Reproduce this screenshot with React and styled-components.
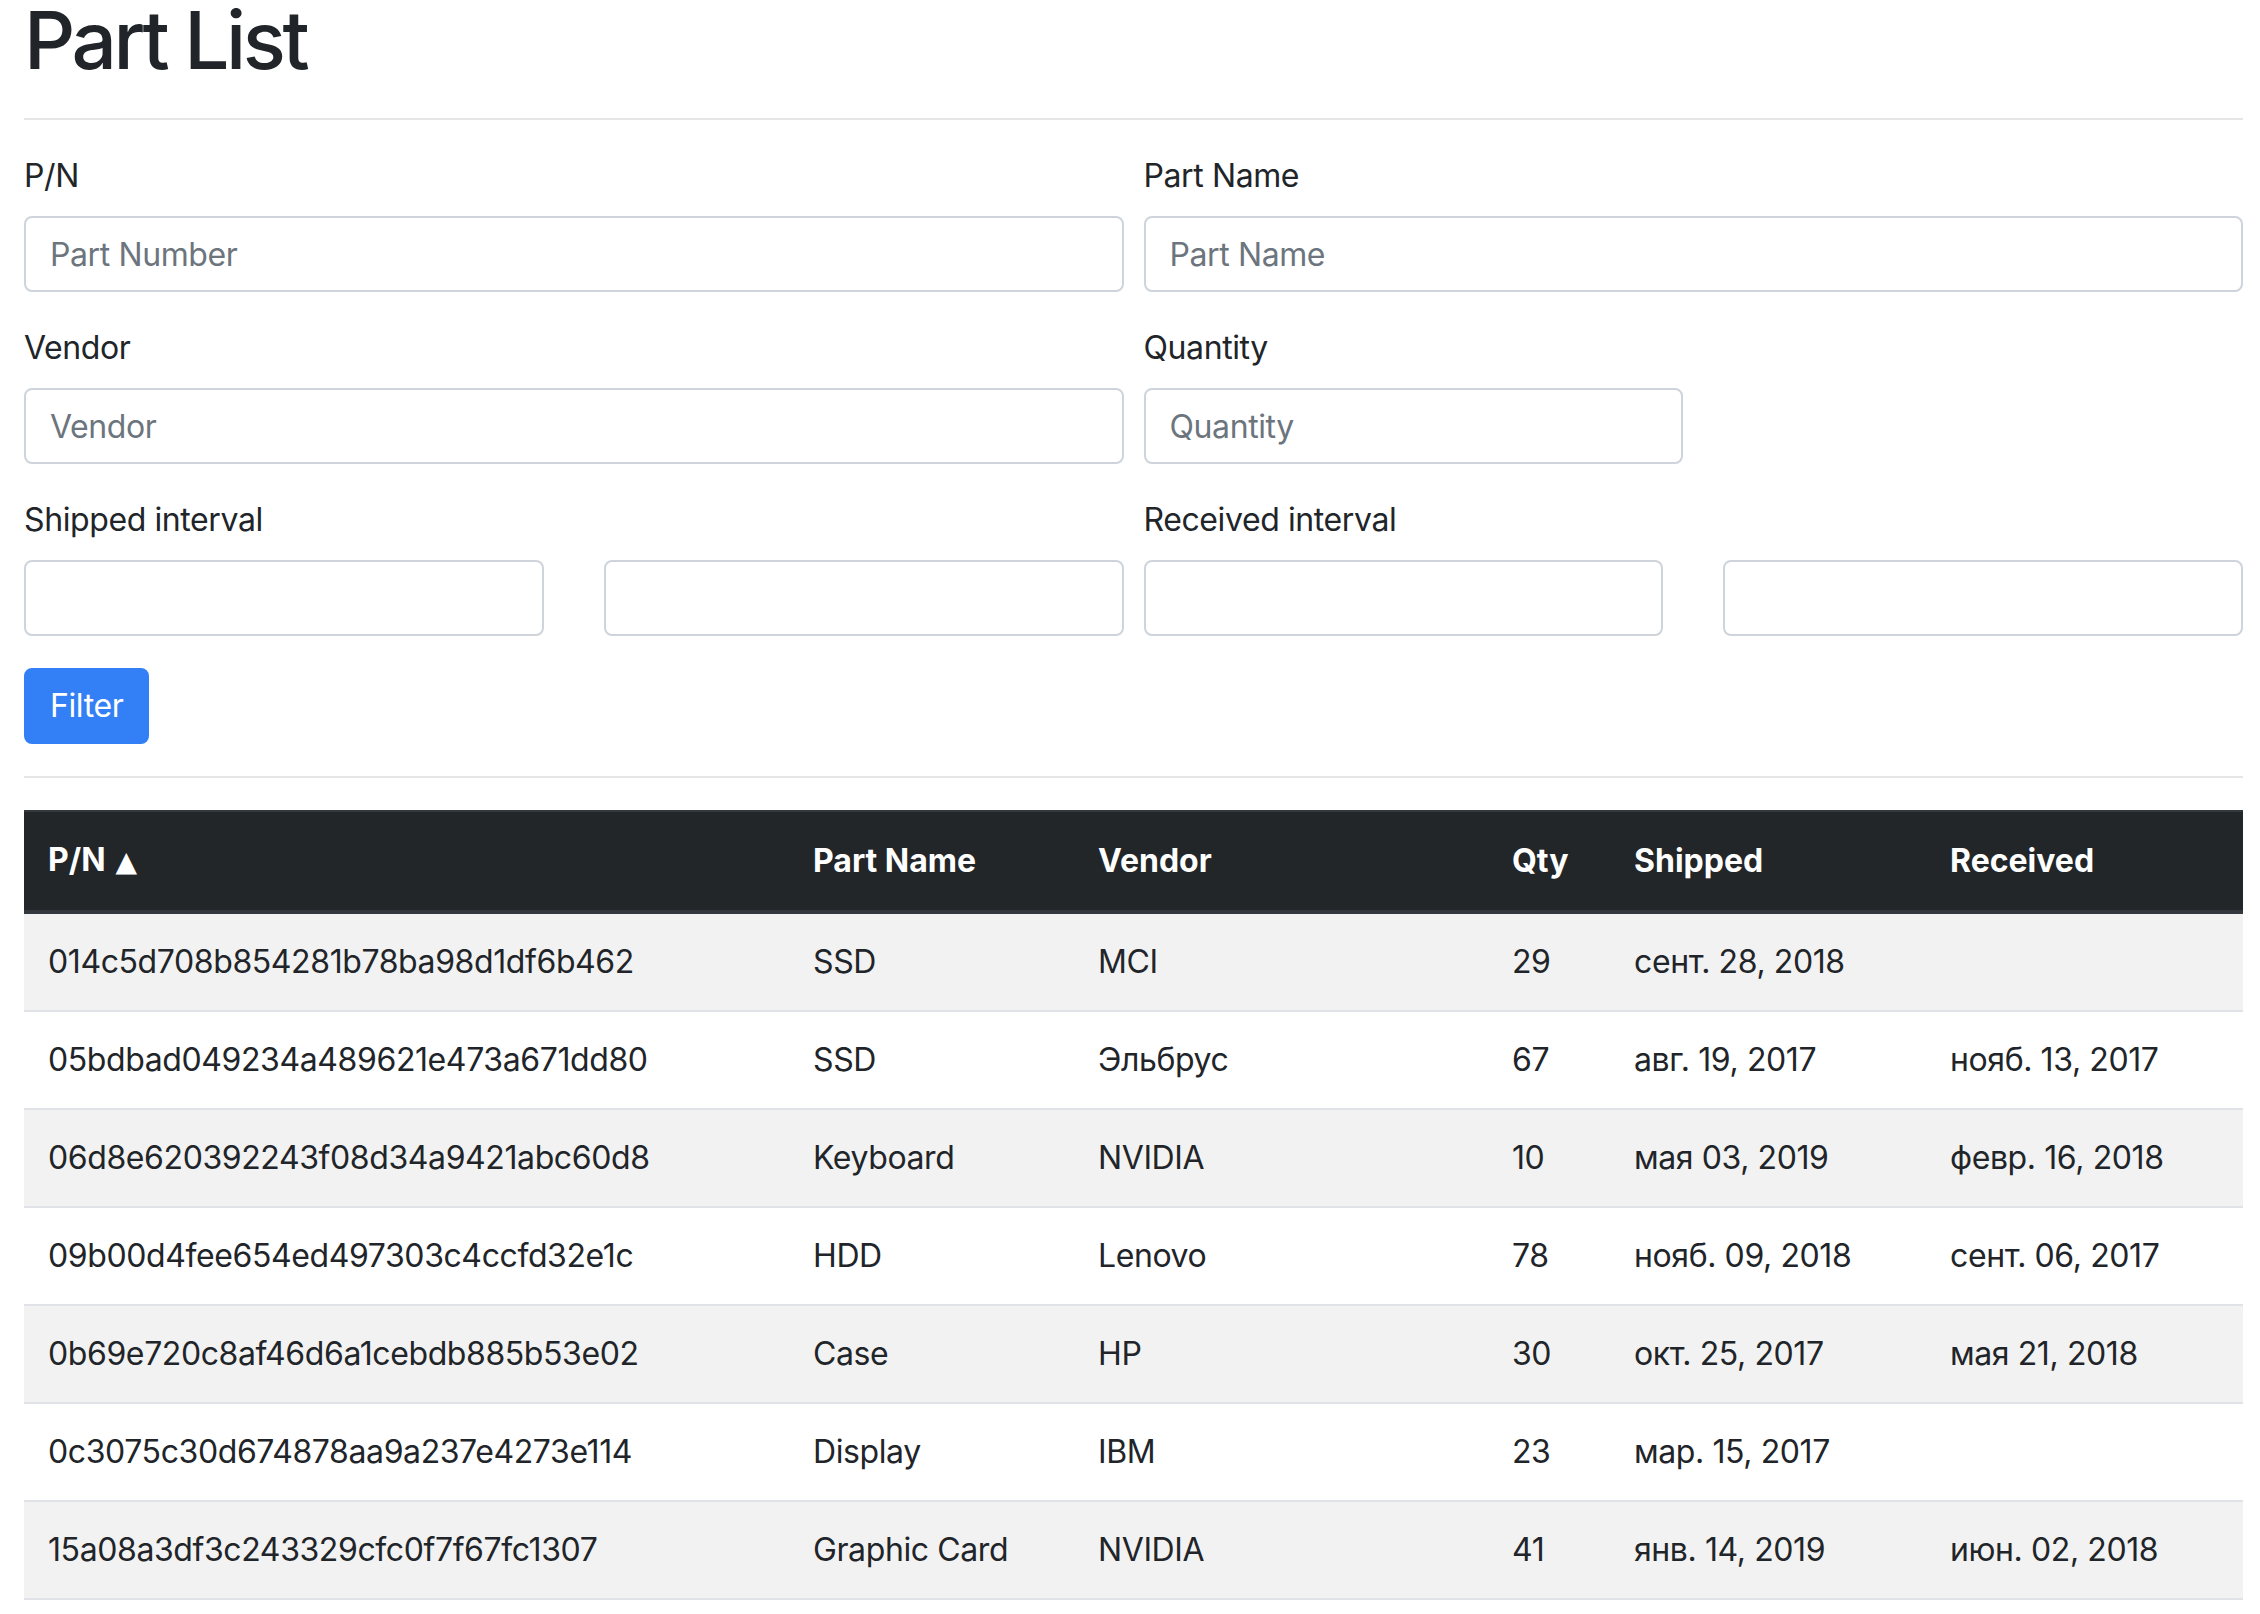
import React from "react";
import styled, { createGlobalStyle } from "styled-components";

const GlobalStyle = createGlobalStyle`
  body {
    margin: 0;
    background: #fff;
    color: #212529;
    font-family: Inter, "Noto Sans", "DejaVu Sans", sans-serif;
    font-size: 32px;
    line-height: 48px;
    letter-spacing: -0.4px;
  }
  * {
    box-sizing: border-box;
  }
`;

const Page = styled.div`
  padding: 0 17px 0 24px;
`;

const Title = styled.h1`
  margin: 0;
  font-size: 80px;
  line-height: 80px;
  height: 78px;
  font-weight: 500;
  letter-spacing: -3.4px;
`;

const Rule = styled.hr`
  margin: ${(p) => p.$top || 32}px 0 32px;
  border: 0;
  border-top: 2px solid #e6e6e6;
`;

const FormRow = styled.div`
  display: grid;
  grid-template-columns: 1fr 1fr;
  column-gap: 20px;
`;

const Group = styled.div`
  margin-bottom: 32px;
`;

const Label = styled.label`
  display: block;
  margin-bottom: 16px;
  height: 48px;
  font-size: 32px;
  line-height: 48px;
`;

const Input = styled.input`
  display: block;
  width: ${(p) => (p.$half ? "calc((100% - 20px) / 2)" : "100%")};
  height: 76px;
  padding: 12px 24px;
  font-family: inherit;
  font-size: 32px;
  line-height: 48px;
  letter-spacing: -0.4px;
  color: #495057;
  background: #fff;
  border: 2px solid #ced4da;
  border-radius: 8px;
  outline: none;

  &::placeholder {
    color: #6c757d;
    opacity: 1;
  }
`;

const Interval = styled.div`
  display: grid;
  grid-template-columns: 1fr 1fr;
  column-gap: 60px;
`;

const Button = styled.button`
  display: inline-block;
  height: 76px;
  padding: 12px 24px;
  font-family: inherit;
  font-size: 32px;
  line-height: 48px;
  letter-spacing: -0.4px;
  color: #fff;
  background: #3380f6;
  border: 2px solid #3380f6;
  border-radius: 8px;
  cursor: pointer;
`;

const Table = styled.table`
  width: 100%;
  border-collapse: collapse;
  table-layout: fixed;
  color: #212529;
`;

const Head = styled.th`
  padding: 24px;
  text-align: left;
  font-weight: 700;
  letter-spacing: 0;
  color: #fff;
  background: #232629;
  border-top: 2px solid #32383e;
  border-bottom: 4px solid #32383e;
  white-space: nowrap;
`;

const Row = styled.tr`
  background: ${(p) => (p.$odd ? "#f2f2f2" : "#fff")};

  &:last-child td {
    border-bottom: 2px solid #dfe2e6;
  }
`;

const Cell = styled.td`
  padding: 24px;
  height: 96px;
  border-top: 2px solid #dfe2e6;
  white-space: nowrap;
  vertical-align: top;
`;

const Arrow = styled.span`
  font-size: 28px;
  margin-left: 10px;
  font-family: "DejaVu Sans", sans-serif;
`;

const columns = [765, 285, 414, 122, 316, 317];

const parts = [
  ["014c5d708b854281b78ba98d1df6b462", "SSD", "MCI", 29, "сент. 28, 2018", ""],
  ["05bdbad049234a489621e473a671dd80", "SSD", "Эльбрус", 67, "авг. 19, 2017", "нояб. 13, 2017"],
  ["06d8e620392243f08d34a9421abc60d8", "Keyboard", "NVIDIA", 10, "мая 03, 2019", "февр. 16, 2018"],
  ["09b00d4fee654ed497303c4ccfd32e1c", "HDD", "Lenovo", 78, "нояб. 09, 2018", "сент. 06, 2017"],
  ["0b69e720c8af46d6a1cebdb885b53e02", "Case", "HP", 30, "окт. 25, 2017", "мая 21, 2018"],
  ["0c3075c30d674878aa9a237e4273e114", "Display", "IBM", 23, "мар. 15, 2017", ""],
  ["15a08a3df3c243329cfc0f7f67fc1307", "Graphic Card", "NVIDIA", 41, "янв. 14, 2019", "июн. 02, 2018"],
];

export default function App() {
  return (
    <Page>
      <GlobalStyle />
      <Title>Part List</Title>
      <Rule $top={40} />

      <form onSubmit={(e) => e.preventDefault()}>
        <FormRow>
          <Group>
            <Label>P/N</Label>
            <Input placeholder="Part Number" />
          </Group>
          <Group>
            <Label>Part Name</Label>
            <Input placeholder="Part Name" />
          </Group>
          <Group>
            <Label>Vendor</Label>
            <Input placeholder="Vendor" />
          </Group>
          <Group>
            <Label>Quantity</Label>
            <Input $half placeholder="Quantity" />
          </Group>
          <Group>
            <Label>Shipped interval</Label>
            <Interval>
              <Input />
              <Input />
            </Interval>
          </Group>
          <Group>
            <Label>Received interval</Label>
            <Interval>
              <Input />
              <Input />
            </Interval>
          </Group>
        </FormRow>
        <Button type="submit">Filter</Button>
      </form>

      <Rule />

      <Table>
        <colgroup>
          {columns.map((w, i) => (
            <col key={i} style={{ width: w }} />
          ))}
        </colgroup>
        <thead>
          <tr>
            <Head>
              P/N<Arrow>▲</Arrow>
            </Head>
            <Head>Part Name</Head>
            <Head>Vendor</Head>
            <Head>Qty</Head>
            <Head>Shipped</Head>
            <Head>Received</Head>
          </tr>
        </thead>
        <tbody>
          {parts.map((p, i) => (
            <Row key={p[0]} $odd={i % 2 === 0}>
              {p.map((v, j) => (
                <Cell key={j}>{v}</Cell>
              ))}
            </Row>
          ))}
        </tbody>
      </Table>
    </Page>
  );
}
